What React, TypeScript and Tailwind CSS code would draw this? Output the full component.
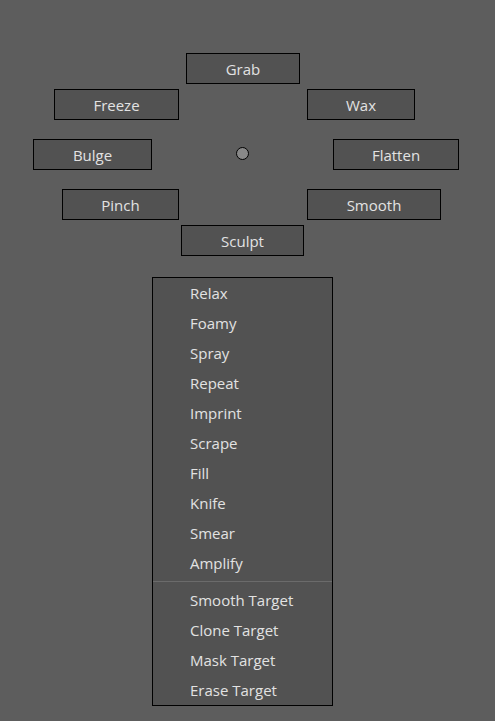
import React from 'react';

const radial = [
    { label: 'Grab', cls: 'left-[186px] top-[53px] w-[114px]' },
    { label: 'Freeze', cls: 'left-[54px] top-[89px] w-[125px]' },
    { label: 'Wax', cls: 'left-[307px] top-[89px] w-[108px]' },
    { label: 'Bulge', cls: 'left-[33px] top-[139px] w-[119px]' },
    { label: 'Flatten', cls: 'left-[333px] top-[139px] w-[126px]' },
    { label: 'Pinch', cls: 'left-[62px] top-[189px] w-[117px]' },
    { label: 'Smooth', cls: 'left-[307px] top-[189px] w-[134px]' },
    { label: 'Sculpt', cls: 'left-[181px] top-[225px] w-[123px]' },
];

const items = ['Relax', 'Foamy', 'Spray', 'Repeat', 'Imprint', 'Scrape', 'Fill', 'Knife', 'Smear', 'Amplify'];
const targets = ['Smooth Target', 'Clone Target', 'Mask Target', 'Erase Target'];

export default function App() {
    return (
        <div
            className="w-[495px] h-[721px] bg-[#5d5d5d] text-[#e2e2e2] text-[15px] overflow-hidden"
            style={{ fontFamily: '"Open Sans", "Noto Sans", sans-serif' }}
        >
            {/* marking menu */}
            <div className="relative h-[277px]">
                {radial.map((r) => (
                    <div
                        key={r.label}
                        className={`absolute h-[31px] ${r.cls} bg-[#525252] border border-black flex items-center justify-center leading-none pt-[2px]`}
                    >
                        {r.label}
                    </div>
                ))}
                <div className="absolute left-[236px] top-[147px] w-[13px] h-[13px] rounded-full bg-[#888888] border border-black"></div>
            </div>

            {/* list menu */}
            <div className="ml-[152px] w-[181px] bg-[#525252] border border-black">
                {items.map((t) => (
                    <div key={t} className="h-[30px] flex items-center pl-[37px] leading-none">
                        {t}
                    </div>
                ))}
                <div className="h-[7px] flex items-center pb-[1px]">
                    <div className="w-full h-px bg-[#6b6b6b]"></div>
                </div>
                {targets.map((t) => (
                    <div key={t} className="h-[30px] flex items-center pl-[37px] leading-none">
                        {t}
                    </div>
                ))}
            </div>
        </div>
    );
}
